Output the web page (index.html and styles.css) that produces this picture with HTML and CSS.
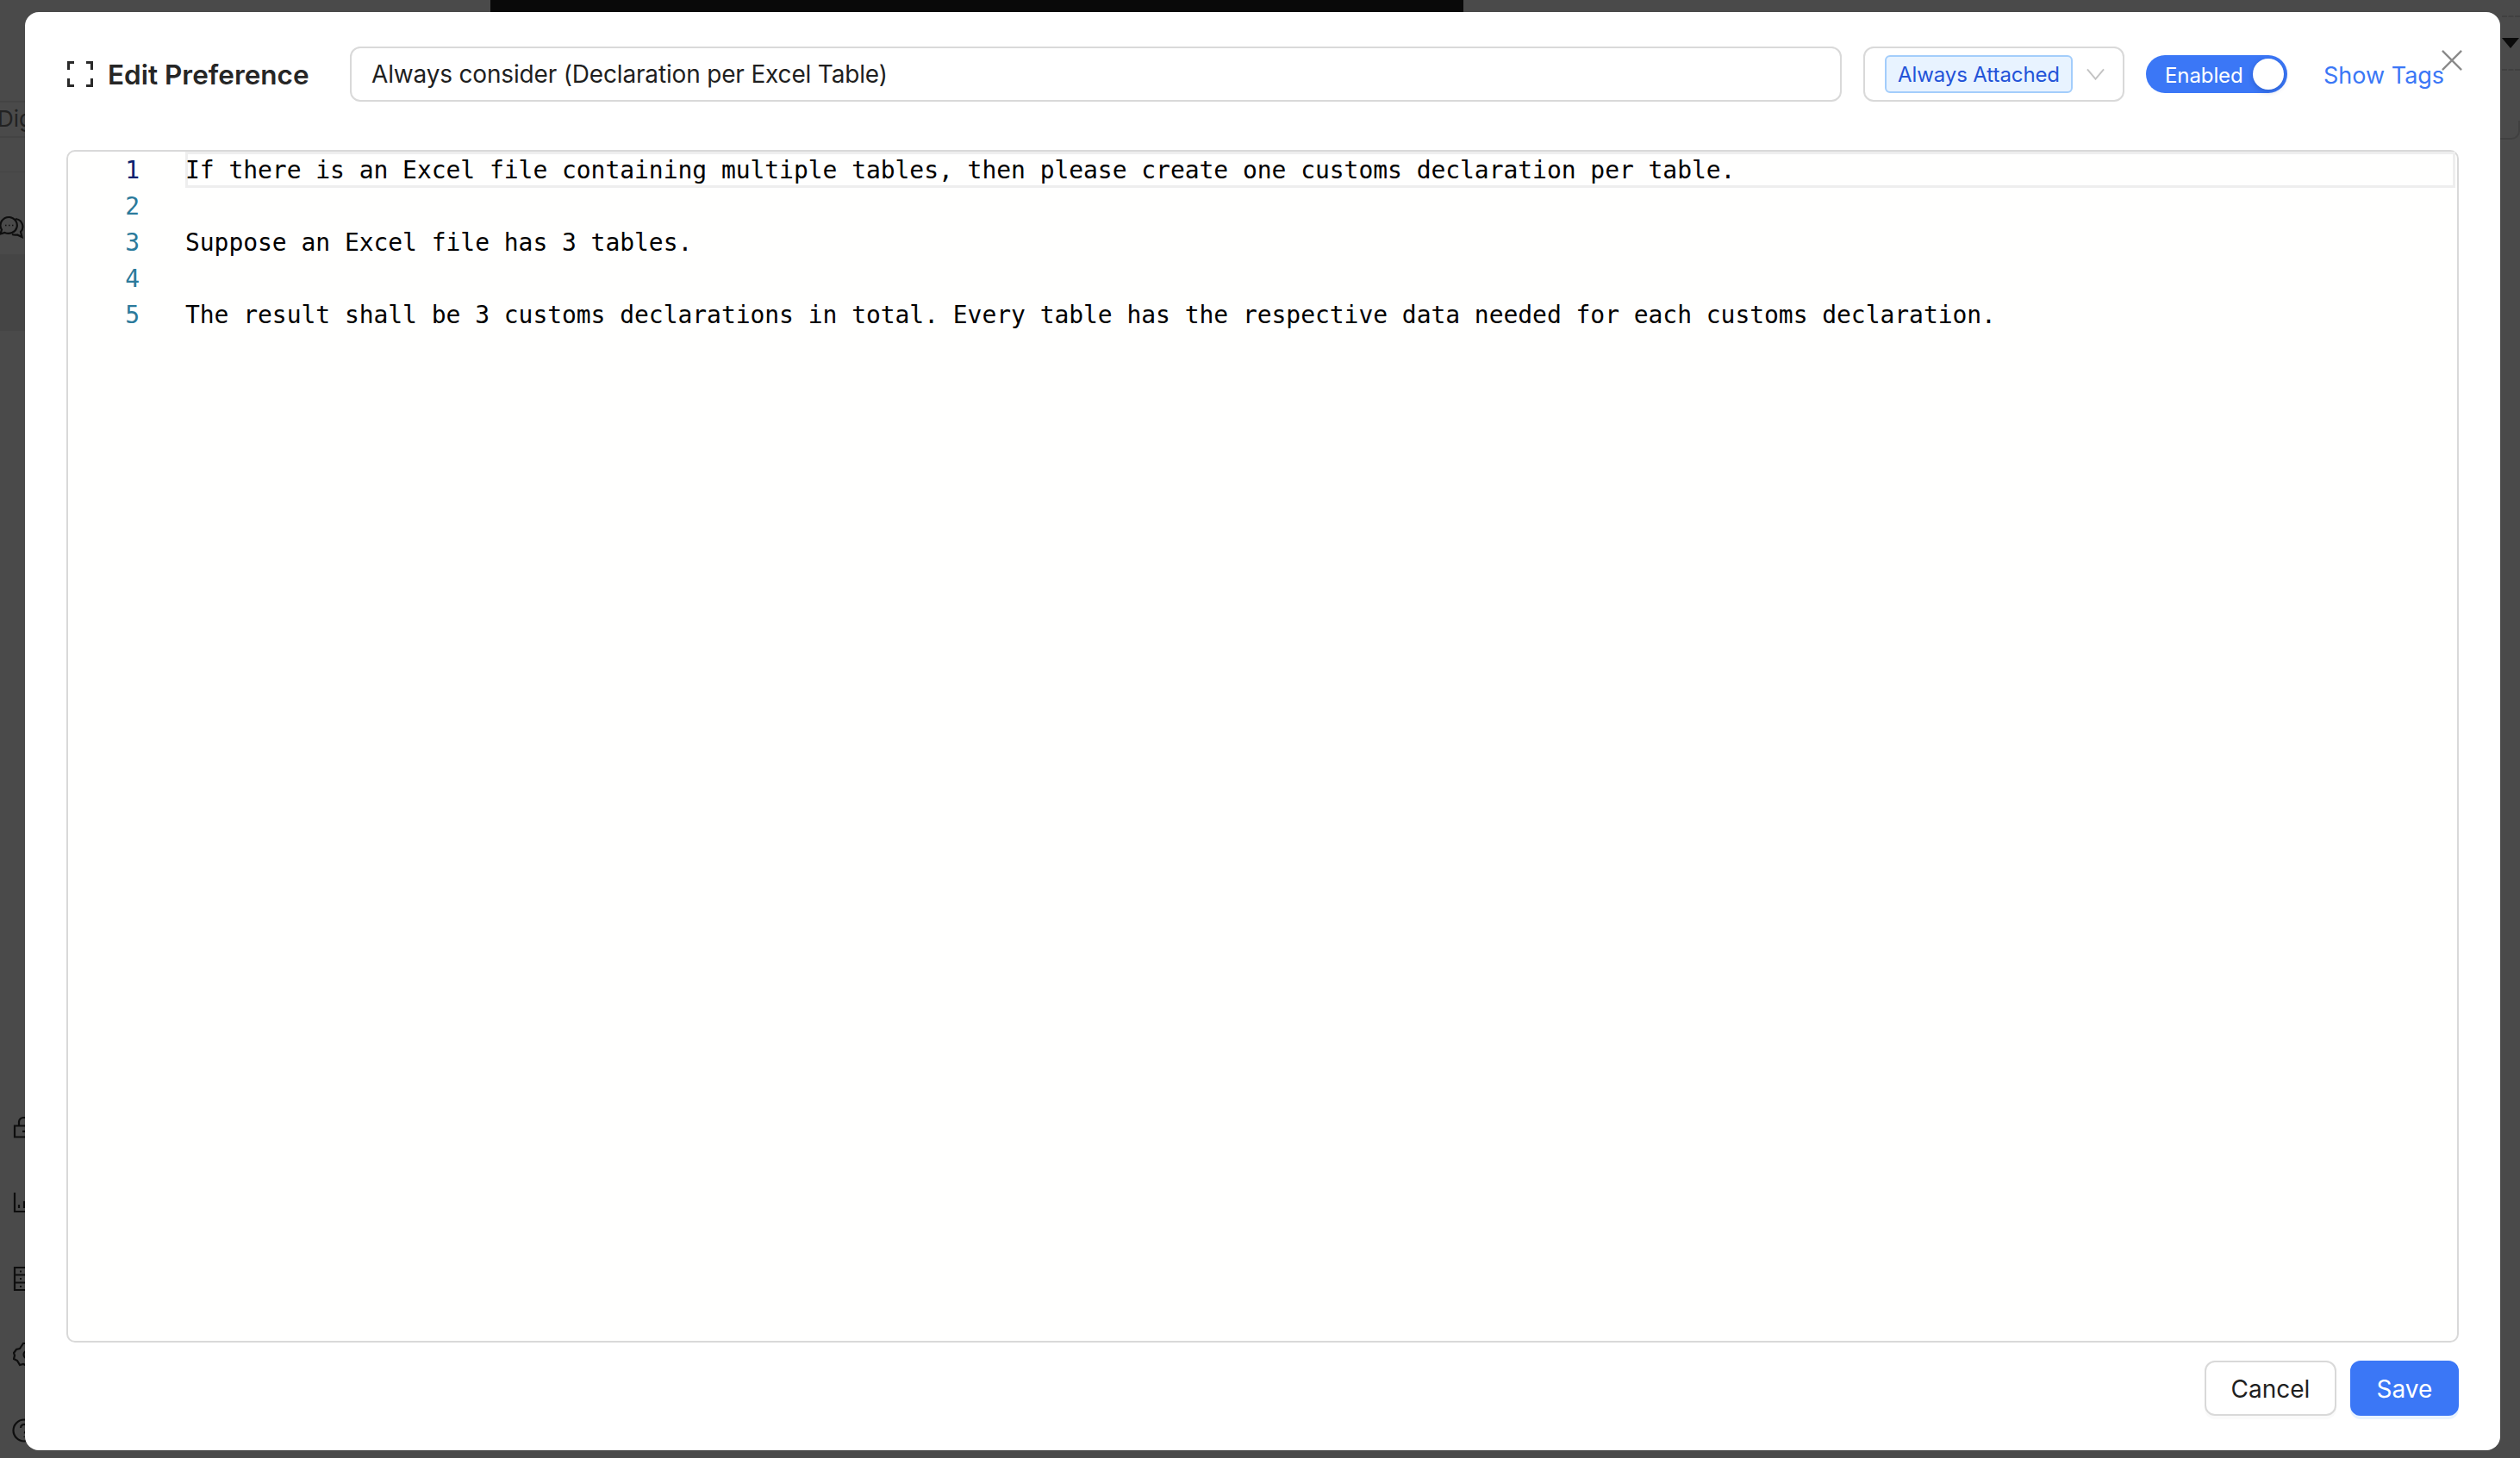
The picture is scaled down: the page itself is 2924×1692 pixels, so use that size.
FILE: index.html
```html
<!DOCTYPE html>
<html lang="en">
<head>
<meta charset="utf-8">
<title>Edit Preference</title>
<link rel="stylesheet" href="styles.css">
</head>
<body>
<div class="backdrop">
  <div class="bg-top-black"></div>
  <div class="bg-tab">Dig</div>
  <div class="bg-rule"></div>
  <div class="bg-panel"></div>
  <svg class="bg-icon bg-chat" viewBox="0 0 28 28"><path d="M11 2a10 9.500 0 0 0-9 14.500L0.500 21.500l5-1.500a10 9.500 0 1 0 5.500-18z"/><path d="M18 4a9 9 0 0 1 6 15l1.500 6-5.500-2.500a10 9 0 0 1-6-0.500"/><path class="dots" d="M6 11.500h1.500M10 11.500h1.500M14 11.500h1.500"/></svg>
  <svg class="bg-icon bg-lock" viewBox="0 0 28 28"><path d="M3 11.500h24v13H3z"/><path d="M8 11.500V7a5 5 0 0 1 5-5h14"/><path d="M12 18h3"/></svg>
  <svg class="bg-icon bg-chart" viewBox="0 0 28 28"><path d="M2 2v22h26"/><path d="M7 20v-4M13 20v-8"/></svg>
  <svg class="bg-icon bg-table" viewBox="0 0 28 28"><path d="M3 1h26v26H3z"/><path d="M3 9.500h26M3 18.500h26"/><path d="M9 5.500h2M9 14h2M9 23h2"/></svg>
  <svg class="bg-icon bg-gear" viewBox="0 0 28 28"><path d="M12 1l3 0 2 4 4 1 3 7-3 2 0 4-3 1-1 3-3 3-2-1-4 1-3-5-4-2 1-4-1-3 3-4 4-1z"/><circle cx="17" cy="14" r="4.500"/></svg>
  <svg class="bg-icon bg-help" viewBox="0 0 28 28"><circle cx="14" cy="14" r="12.500"/><path d="M10 11a4 4 0 1 1 6 3.500l-1.500 3M14.500 21v1"/></svg>
  <div class="bg-dash bg-dash-a"></div>
  <div class="bg-dash bg-dash-b"></div>
  <div class="bg-caret"></div>
  <div class="bg-corner"></div>
</div>

<main class="modal">
  <header class="head">
    <div class="title-wrap">
      <svg class="expand" viewBox="0 0 30 30"><path d="M8 1.500H1.500V10M22 1.500h6.500V10M1.500 20v8.500H8M28.500 20v8.500H22"/></svg>
      <h1 class="title">Edit Preference</h1>
    </div>
    <input class="name" type="text" value="Always consider (Declaration per Excel Table)">
    <div class="select">
      <span class="tag">Always Attached</span>
      <svg class="chev" viewBox="0 0 22 14"><path d="M1 1l10 12L21 1"/></svg>
    </div>
    <div class="toggle"><span>Enabled</span><i class="knob"></i></div>
    <a class="link">Show Tags</a>
    <svg class="close" viewBox="0 0 26 26"><path d="M1 1l24 24M25 1L1 25"/></svg>
  </header>

  <section class="editor">
    <div class="gutter">
      <div class="ln active">1</div>
      <div class="ln">2</div>
      <div class="ln">3</div>
      <div class="ln">4</div>
      <div class="ln">5</div>
    </div>
    <div class="code">
      <div class="line current">If there is an Excel file containing multiple tables, then please create one customs declaration per table.</div>
      <div class="line"></div>
      <div class="line">Suppose an Excel file has 3 tables.</div>
      <div class="line"></div>
      <div class="line">The result shall be 3 customs declarations in total. Every table has the respective data needed for each customs declaration.</div>
    </div>
  </section>

  <footer class="foot">
    <button class="btn">Cancel</button>
    <button class="btn primary">Save</button>
  </footer>
</main>
</body>
</html>
```
FILE: styles.css
```css
* { box-sizing: border-box; }
html, body { margin: 0; height: 100%; }
body {
  width: 2924px;
  height: 1692px;
  overflow: hidden;
  background: #4a4a4a;
  font-family: Inter, "Liberation Sans", sans-serif;
  padding: 14px 23px 9px 29px;
  position: relative;
}
.backdrop { position: absolute; inset: 0; overflow: hidden; }
.bg-top-black { position: absolute; left: 569px; top: 0; width: 1129px; height: 14px; background: #090909; }
.bg-tab {
  position: absolute; left: -3px; top: 117px; width: 40px; height: 43px;
  border-top: 2px solid #444; border-bottom: 2px solid #444;
  color: #222; font-size: 26px; line-height: 38px; padding-left: 0;
}
.bg-rule { position: absolute; left: 0; top: 199px; width: 30px; height: 1px; background: #454545; }
.bg-panel { position: absolute; left: 0; top: 295px; width: 30px; height: 89px; background: #454545; }
.bg-icon { position: absolute; left: 15px; width: 28px; height: 28px; fill: none; stroke: #0e0e0e; stroke-width: 2.2; }
.bg-chat { left: 0; top: 250px; }
.dots { stroke-width: 1.6; }
.bg-lock { left: 14px; top: 1295px; }
.bg-chart { top: 1382px; }
.bg-table { left: 14px; top: 1470px; }
.bg-gear { top: 1558px; }
.bg-help { left: 14px; top: 1646px; }
.bg-dash { position: absolute; left: 2903px; width: 21px; height: 0; border-top: 2px dashed #404040; }
.bg-dash-a { top: 18px; }
.bg-dash-b { top: 80px; }
.bg-caret {
  position: absolute; left: 2903px; top: 44px;
  border-left: 10px solid transparent; border-right: 10px solid transparent; border-top: 12px solid #0a0a0a;
}
.bg-corner {
  position: absolute; left: 2890px; top: 140px; width: 34px; height: 22px;
  border-right: 2px solid #404040; border-bottom: 2px solid #404040; border-bottom-right-radius: 10px;
}
.modal {
  position: relative;
  height: 1669px;
  background: #fff;
  border-radius: 16px;
  padding: 40px 48px;
  display: flex;
  flex-direction: column;
}
.head { display: flex; align-items: center; height: 64px; position: relative; }
.title-wrap { width: 329px; display: flex; align-items: center; gap: 17px; padding-left: 1px; }
.expand { width: 30px; height: 30px; fill: none; stroke: #2a2a2a; stroke-width: 3.2; }
.title { margin: 0; font-size: 31.5px; font-weight: 600; color: #262626; white-space: nowrap; }
.name {
  width: 1731px; height: 64px;
  border: 2px solid #d9d9d9; border-radius: 12px;
  padding: 0 23px; font: 400 28px Inter, sans-serif; letter-spacing: -0.17px; color: #1f1f1f; outline: none;
}
.select {
  margin-left: 25px; width: 303px; height: 64px;
  border: 2px solid #d9d9d9; border-radius: 12px;
  display: flex; align-items: center; padding-left: 23px; gap: 16px;
}
.tag {
  width: 218px; height: 44px; background: #e8f3ff; border: 2px solid #a3cdfb; border-radius: 6px;
  color: #2353d8; font-size: 24px; letter-spacing: -0.1px; line-height: 42px; text-align: center; white-space: nowrap;
}
.chev { width: 21px; height: 14px; fill: none; stroke: #c4c4c4; stroke-width: 2; }
.toggle {
  margin-left: 25px; width: 164px; height: 44px; border-radius: 22px; background: #3b77f6;
  display: flex; align-items: center; padding: 2px 4px 0 22px; justify-content: space-between;
  color: #fff; font-size: 24px; letter-spacing: -0.1px;
}
.knob { width: 36px; height: 36px; margin-top: -2px; border-radius: 50%; background: #fff; box-shadow: 0 2px 6px rgba(0,40,120,.3); }
.link { margin-left: 42px; padding-top: 2px; color: #3b77f6; font-size: 27px; white-space: nowrap; }
.close { position: absolute; left: 2756px; top: 4px; width: 24px; height: 24px; fill: none; stroke: #8a8a8a; stroke-width: 2.5; }
.editor {
  margin-top: 56px;
  height: 1384px;
  border: 2px solid #d9d9d9;
  border-radius: 10px;
  display: flex;
  background: #fffffe;
  font-family: "DejaVu Sans Mono", monospace;
  font-size: 28px;
  letter-spacing: -0.05px;
  line-height: 44px;
  color: #000;
}
.gutter { width: 136px; flex: none; padding-right: 53px; text-align: right; color: #2b7a9b; }
.ln { height: 42px; }
.ln.active { color: #0b216f; }
.code { flex: 1; min-width: 0; }
.line { height: 42px; white-space: pre; }
.line.current { box-shadow: inset 0 0 0 3px #eeeeee; margin-right: 2px; }
.foot { display: flex; justify-content: flex-end; gap: 16px; margin-top: 21px; }
.btn {
  height: 64px; width: 153px; padding-top: 2px;
  border: 2px solid #d9d9d9; border-radius: 12px; background: #fff;
  font: 400 28px Inter, sans-serif; color: #1f1f1f;
  box-shadow: 0 4px 0 rgba(0,0,0,.02);
}
.btn.primary { width: 126px; background: #3b77f6; border-color: #3b77f6; color: #fff; box-shadow: 0 4px 0 #e8f3ff; }
```
